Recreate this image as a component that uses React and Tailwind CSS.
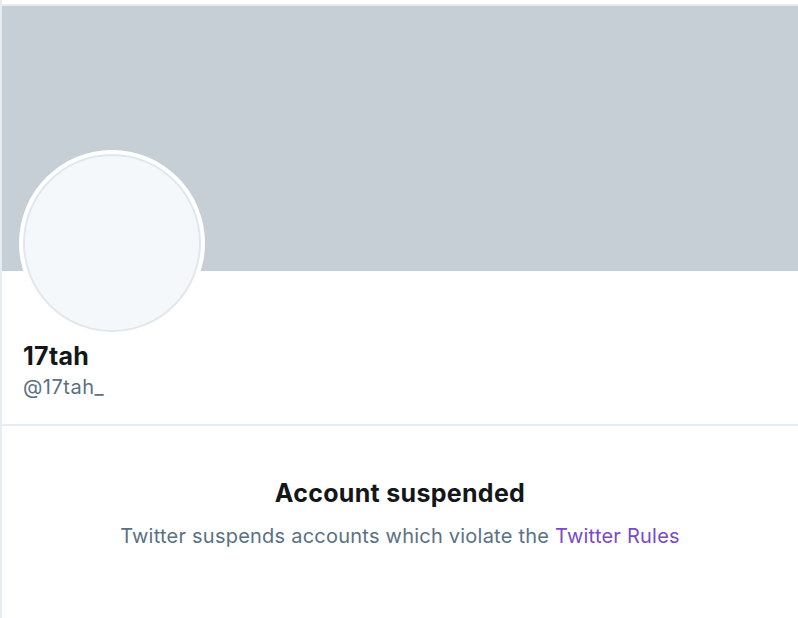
const App = () => {
  return (
    <div
      className="w-[798px] h-[618px] bg-white overflow-hidden border-l-2 border-[#e6ecf0]"
      style={{ fontFamily: 'Inter, "Noto Sans", sans-serif' }}
    >
      <div className="h-1 bg-white" />
      <div className="h-[2px] bg-[#e6ecf0]" />

      {/* Header */}
      <div className="relative">
        <div className="h-[265px] bg-[#c6ced6]" />
        <div className="absolute left-[17px] top-[144px] w-[186px] h-[186px] rounded-full bg-white p-[4px]">
          <div className="w-full h-full rounded-full bg-[#f5f8fa] border-2 border-[#e1e8ed]" />
        </div>
        <div className="h-[153px] px-[21px] pt-[70px]">
          <p className="text-[25px] leading-[30px] font-bold tracking-[0.3px] text-[#14171a]">17tah</p>
          <p className="mt-[3px] text-[20px] leading-[26px] tracking-[0.5px] text-[#5b7083]">@17tah_</p>
        </div>
      </div>

      <div className="h-[2px] bg-[#e6ecf0]" />

      {/* Suspended notice */}
      <div className="flex flex-col items-center pt-[51px]">
        <h2 className="text-[25px] leading-[32px] font-bold tracking-[0.3px] text-[#14171a]">Account suspended</h2>
        <p className="mt-[14px] text-[20px] leading-[26px] tracking-[0.23px] text-[#5b7083]">
          Twitter suspends accounts which violate the{' '}
          <a href="#" className="text-[#794bc4]">Twitter Rules</a>
        </p>
      </div>
    </div>
  );
};

export default App;
